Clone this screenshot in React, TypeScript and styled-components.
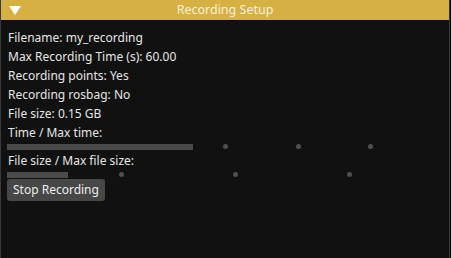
import styled, { createGlobalStyle } from 'styled-components';

const GlobalStyle = createGlobalStyle`
  html, body {
    margin: 0;
    padding: 0;
    background: #000;
  }
  body {
    font-family: 'Noto Sans', 'Open Sans', sans-serif;
    font-size: 12px;
  }
`;

const Window = styled.div`
  width: 450px;
  height: 258px;
  box-sizing: border-box;
  background: #111111;
  border-left: 1px solid #3a3a3a;
  border-right: 1px solid #3a3a3a;
  display: flex;
  flex-direction: column;
  overflow: hidden;
`;

const TitleBar = styled.div`
  height: 20px;
  margin: 0 -1px;
  background: #d6b043;
  display: grid;
  grid-template-columns: 28px 1fr 28px;
  align-items: center;
`;

const Collapse = styled.svg`
  width: 12px;
  height: 9px;
  margin-left: 9px;
  fill: #ffffff;
`;

const Title = styled.div`
  text-align: center;
  color: #f8f0d8;
  font-size: 12.5px;
  line-height: 20px;
`;

const Body = styled.div`
  padding: 8px 6px 0 6px;
  display: flex;
  flex-direction: column;
  color: #e6e6e6;
`;

const Line = styled.div`
  height: 19px;
  line-height: 19px;
  padding-left: 1px;
  white-space: nowrap;
`;

const Track = styled.div`
  position: relative;
  height: 9px;
  display: flex;
  align-items: center;
`;

const Fill = styled.div`
  height: 6px;
  background: #4a4a4a;
`;

const Tick = styled.span`
  position: absolute;
  top: 2px;
  width: 5px;
  height: 5px;
  margin-left: -2px;
  border-radius: 50%;
  background: #505050;
`;

const Button = styled.button`
  align-self: flex-start;
  height: 22px;
  padding: 0 6px;
  border: none;
  border-radius: 3px;
  background: #474747;
  color: #ececec;
  font-family: inherit;
  font-size: 12px;
  line-height: 22px;
`;

const bars = [
  { label: 'Time / Max time:', width: 186, ticks: [218, 291, 363] },
  { label: 'File size / Max file size:', width: 61, ticks: [114, 228, 342] },
];

const info = [
  'Filename: my_recording',
  'Max Recording Time (s): 60.00',
  'Recording points: Yes',
  'Recording rosbag: No',
  'File size: 0.15 GB',
];

export default function App() {
  return (
    <>
      <GlobalStyle />
      <Window>
        <TitleBar>
          <Collapse viewBox="0 0 12 9">
            <polygon points="0,0 12,0 6,9" />
          </Collapse>
          <Title>Recording Setup</Title>
          <span />
        </TitleBar>
        <Body>
          {info.map((t) => (
            <Line key={t}>{t}</Line>
          ))}
          {bars.map((b) => (
            <div key={b.label}>
              <Line>{b.label}</Line>
              <Track>
                <Fill style={{ width: b.width }} />
                {b.ticks.map((x) => (
                  <Tick key={x} style={{ left: x }} />
                ))}
              </Track>
            </div>
          ))}
          <Button>Stop Recording</Button>
        </Body>
      </Window>
    </>
  );
}
